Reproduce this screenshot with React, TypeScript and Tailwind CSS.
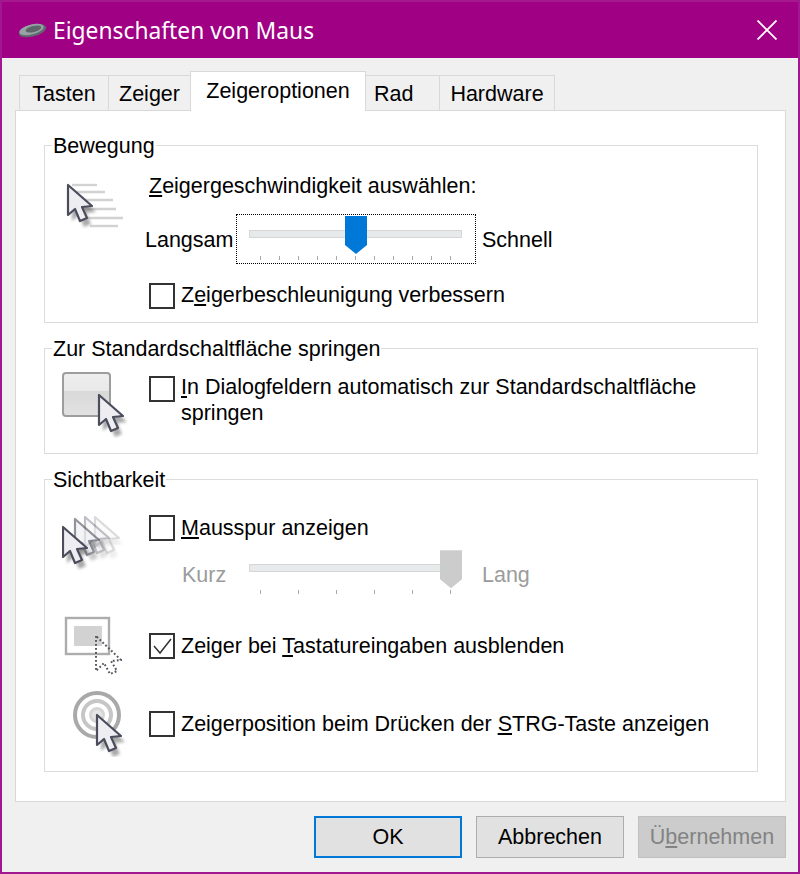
import React from 'react';

const Arrow = ({ x, y, opacity = 1 }: { x: number; y: number; opacity?: number }) => (
  <g transform={`translate(${x} ${y})`} opacity={opacity}>
    <path d="M2 3 L2 34 L9 28 L14 40 L21 37 L16 26 L26 25 Z" fill="#555" opacity="0.5" filter="url(#soft)" transform="translate(2 2)" />
    <path d="M0 0 L0 30 L7 24 L12 36 L19 33 L14 22 L24 21 Z" fill="#eeeef2" stroke="#4b4c5c" strokeWidth="2.2" strokeLinejoin="round" />
  </g>
);

const Blur = () => (
  <defs>
    <filter id="soft" x="-30%" y="-30%" width="160%" height="160%">
      <feGaussianBlur stdDeviation="1.6" />
    </filter>
  </defs>
);

const SpeedIcon = () => (
  <svg width="64" height="56" viewBox="0 0 64 56" className="shrink-0">
    <Blur />
    {[
      [6, 10, 31],
      [6, 17, 39],
      [6, 25, 47],
      [14, 34, 50],
      [22, 43, 57],
      [24, 51, 52],
    ].map(([a, y, b]) => (
      <line key={y} x1={a} y1={y} x2={b} y2={y} stroke="#c4c4c4" strokeWidth="2.4" opacity="0.75" />
    ))}
    <Arrow x={2} y={10} />
  </svg>
);

const ButtonIcon = () => (
  <svg width="66" height="66" viewBox="0 0 66 66" className="shrink-0">
    <Blur />
    <defs>
      <linearGradient id="face" x1="0" y1="0" x2="0" y2="1">
        <stop offset="0" stopColor="#eeeeee" />
        <stop offset="0.42" stopColor="#e9e9e9" />
        <stop offset="0.43" stopColor="#d9d9d9" />
        <stop offset="1" stopColor="#e2e2e2" />
      </linearGradient>
    </defs>
    <rect x="1" y="1" width="47" height="43" rx="3" fill="url(#face)" stroke="#9d9d9d" strokeWidth="2" />
    <Arrow x={37} y={23} />
  </svg>
);

const TrailIcon = () => (
  <svg width="66" height="60" viewBox="0 0 66 60" className="shrink-0">
    <Blur />
    <Arrow x={33} y={5} opacity={0.2} />
    <Arrow x={23} y={5} opacity={0.35} />
    <Arrow x={13} y={7} opacity={0.6} />
    <Arrow x={1} y={15} />
  </svg>
);

const HideIcon = () => (
  <svg width="60" height="66" viewBox="0 0 60 66" className="shrink-0">
    <g transform="translate(3 4)">
      <rect x="1" y="1" width="43" height="36" fill="#fff" stroke="#adadad" strokeWidth="2.4" />
      <rect x="9" y="9" width="28" height="20" fill="#d2d2d2" />
      <path
        d="M31 19 L31 54 L39 46 L45 57 L52 54 L46 44 L56 43 Z"
        fill="none"
        stroke="#55565f"
        strokeWidth="2"
        strokeDasharray="1.8 2.2"
      />
    </g>
  </svg>
);

const TargetIcon = () => (
  <svg width="66" height="66" viewBox="0 0 66 66" className="shrink-0">
    <Blur />
    <circle cx="35" cy="24" r="22" fill="#fff" stroke="#a9a9a9" strokeWidth="4" />
    <circle cx="35" cy="24" r="14" fill="#fff" stroke="#c6c6c6" strokeWidth="4" />
    <circle cx="35" cy="24" r="6.5" fill="#e6e6e6" stroke="#d6d6d6" strokeWidth="3" />
    <Arrow x={35} y={24} />
  </svg>
);

const Checkbox = ({ checked = false }: { checked?: boolean }) => (
  <span className="w-[26px] h-[26px] border-2 border-[#333333] bg-white shrink-0 flex items-center justify-center">
    {checked && (
      <svg width="22" height="22" viewBox="0 0 22 22">
        <path d="M3 11 L9 18 L20 4" fill="none" stroke="#333333" strokeWidth="1.5" />
      </svg>
    )}
  </span>
);

const Slider = ({ value, ticks, disabled = false }: { value: string; ticks: number; disabled?: boolean }) => (
  <div className="relative w-[213px] h-[46px] pt-[14px]">
    <div className="h-[8px] border border-[#d6d6d6] bg-[#e7eaea]" />
    <div className={`absolute top-0 w-[22px] h-[38px] [clip-path:polygon(0_0,100%_0,100%_76%,50%_100%,0_76%)] ${value} ${disabled ? 'bg-[#cccccc]' : 'bg-[#0078d7]'}`} />
    <div className="flex justify-between ml-[11px] mr-[11px] mt-[18px]">
      {Array.from({ length: ticks }).map((_, i) => (
        <span key={i} className="w-px h-[4px] bg-[#a8a8a8]" />
      ))}
    </div>
  </div>
);

const Group = ({ title, className, children }: { title: string; className: string; children: React.ReactNode }) => (
  <fieldset className={`border border-[#dcdcdc] ${className}`}>
    <legend className="ml-[7px] pl-[1px] pr-[1px] h-[24px] leading-[27px]">{title}</legend>
    {children}
  </fieldset>
);

const App: React.FC = () => {
  return (
    <div className="w-[800px] h-[874px] flex flex-col bg-[#f0f0f0] text-black border-x-2 border-b-2 border-[#a0178f] font-['Liberation_Sans',sans-serif] text-[21.5px] overflow-hidden">
      {/* Title bar */}
      <header className="h-[58px] -mx-[2px] shrink-0 bg-[#a00084] border-t-2 border-[#a5198f] flex items-center pl-[18px] pr-[23px] text-white">
        <svg width="30" height="18" viewBox="0 0 30 18" className="shrink-0">
          <ellipse cx="14.5" cy="9.5" rx="14" ry="6" transform="rotate(-14 14.5 9.5)" fill="#5f686c" />
          <ellipse cx="13.5" cy="8.5" rx="12.5" ry="5" transform="rotate(-14 13.5 8.5)" fill="#98a2a6" />
          <ellipse cx="15.5" cy="8" rx="8" ry="3" transform="rotate(-14 15.5 8)" fill="#5d6569" />
        </svg>
        <span className="ml-[5px] pt-[2px] font-['Noto_Sans',sans-serif] text-[22.8px] leading-none">Eigenschaften von Maus</span>
        <svg width="20" height="20" viewBox="0 0 20 20" className="ml-auto">
          <path d="M0.5 0.5 L19.5 19.5 M19.5 0.5 L0.5 19.5" stroke="#ffffff" strokeWidth="1.8" fill="none" />
        </svg>
      </header>

      {/* Tabs */}
      <div className="flex items-end h-[40px] mt-[13px] ml-[17px] -mb-px relative z-10">
        <div className="w-[90px] h-[36px] border border-b-0 border-[#d9d9d9] flex items-center justify-center pt-[2px]">Tasten</div>
        <div className="w-[82px] h-[36px] border border-l-0 border-b-0 border-[#d9d9d9] flex items-center justify-center pt-[2px]">Zeiger</div>
        <div className="w-[176px] h-[40px] bg-white border border-b-0 border-[#d9d9d9] flex items-center justify-center pb-[1px] -ml-px">Zeigeroptionen</div>
        <div className="w-[74px] h-[36px] border-t border-r border-[#d9d9d9] flex items-center pl-[8px] pt-[2px]">Rad</div>
        <div className="w-[115px] h-[36px] border-t border-r border-[#d9d9d9] flex items-center justify-center pt-[2px]">Hardware</div>
      </div>

      {/* Panel */}
      <main className="h-[692px] ml-[13px] mr-[12px] bg-white border border-[#d9d9d9] pt-[22px] pl-[28px] pr-[27px] flex flex-col">
        <Group title="Bewegung" className="h-[190px] mb-[13px]">
          <div className="flex pl-[21px] pt-[18px]">
            <SpeedIcon />
            <div className="ml-[15px] flex flex-col">
              <div className="h-[24px] leading-[24px] ml-[4px] -mt-[1px]">
                <span className="underline">Z</span>eigergeschwindigkeit auswählen:
              </div>
              <div className="flex items-center mt-[16px] h-[50px]">
                <span className="w-[91px] pt-[3px]">Langsam</span>
                <div className="w-[240px] h-[50px] border border-dotted border-black pl-[12px] pt-[1px]">
                  <Slider value="left-[96px]" ticks={11} />
                </div>
                <span className="ml-[6px] pt-[3px]">Schnell</span>
              </div>
              <div className="flex items-center gap-[6px] ml-[4px] mt-[17px]">
                <Checkbox />
                <span className="-mt-[2px]">
                  Z<span className="underline">e</span>igerbeschleunigung verbessern
                </span>
              </div>
            </div>
          </div>
        </Group>

        <Group title="Zur Standardschaltfläche springen" className="h-[118px] mb-[13px]">
          <div className="flex pl-[17px] pt-[12px]">
            <ButtonIcon />
            <div className="flex gap-[6px] ml-[21px] pt-[4px]">
              <Checkbox />
              <div className="leading-[26px] -mt-[2px]">
                <div>
                  <span className="underline">I</span>n Dialogfeldern automatisch zur Standardschaltfläche
                </div>
                <div>springen</div>
              </div>
            </div>
          </div>
        </Group>

        <Group title="Sichtbarkeit" className="h-[305px]">
          <div className="flex flex-col pl-[17px] pt-[21px]">
            <div className="flex">
              <TrailIcon />
              <div className="ml-[21px] flex flex-col">
                <div className="flex items-center gap-[6px]">
                  <Checkbox />
                  <span>
                    <span className="underline">M</span>ausspur anzeigen
                  </span>
                </div>
                <div className="flex items-center mt-[6px] text-[#9b9b9b]">
                  <span className="w-[67px] ml-[33px] pt-[4px]">Kurz</span>
                  <Slider value="left-[191px]" ticks={6} disabled />
                  <span className="ml-[20px] pt-[4px]">Lang</span>
                </div>
              </div>
            </div>
            <div className="flex items-center mt-[17px] h-[66px]">
              <HideIcon />
              <div className="flex items-center gap-[6px] ml-[27px]">
                <Checkbox checked />
                <span>
                  Zeiger bei <span className="underline">T</span>astatureingaben ausblenden
                </span>
              </div>
            </div>
            <div className="flex items-center mt-[12px] h-[66px]">
              <TargetIcon />
              <div className="flex items-center gap-[6px] ml-[21px]">
                <Checkbox />
                <span>
                  Zeigerposition beim Drücken der <span className="underline">S</span>TRG-Taste anzeigen
                </span>
              </div>
            </div>
          </div>
        </Group>
      </main>

      {/* Buttons */}
      <footer className="flex justify-end gap-[14px] mt-[14px] mr-[12px]">
        <button className="w-[148px] h-[42px] bg-[#e1e1e1] border-2 border-[#0078d7] pt-[1px]">OK</button>
        <button className="w-[148px] h-[42px] bg-[#e1e1e1] border border-[#adadad] pt-[1px]">Abbrechen</button>
        <button className="w-[148px] h-[42px] bg-[#cccccc] border border-[#bfbfbf] text-[#838383] pt-[1px]">
          Ü<span className="underline">b</span>ernehmen
        </button>
      </footer>
    </div>
  );
};

export default App;
